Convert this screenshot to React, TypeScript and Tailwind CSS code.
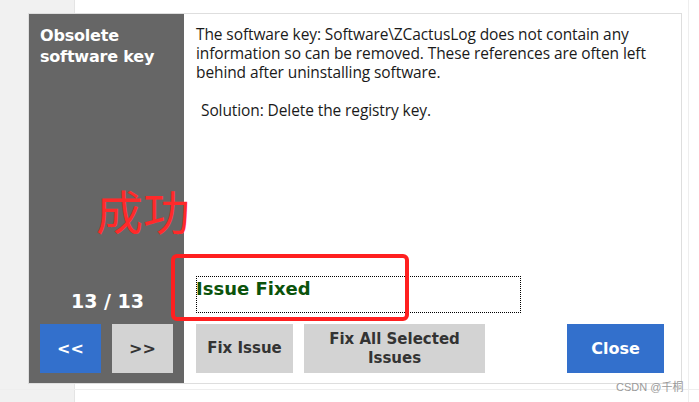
const App = () => {
  return (
    <div className="relative w-[699px] h-[402px] overflow-hidden bg-white flex" style={{ fontFamily: '"DejaVu Sans", sans-serif' }}>
      {/* page behind the dialog */}
      <div className="w-[75px] h-full bg-[#f1f1f1] border-r border-[#e4e4e4]" />
      <div className="flex-1 h-full bg-white border-r border-[#eeeeee] mr-[10px]" />
      <div className="absolute left-0 right-0 top-[389px] h-px bg-[#eeeeee]" />

      {/* dialog */}
      <div className="absolute left-[28px] top-[13px] w-[654px] h-[371px] flex border border-[#dedede] bg-white">
        <div className="w-[155px] h-full bg-[#666666] flex flex-col px-[11px] pt-[11px] pb-[10px]">
          <h2 className="text-white font-bold text-[16px] leading-[21px] tracking-[-0.2px]">Obsolete software key</h2>
          <div className="flex-1" />
          <div className="text-white font-bold text-[19px] text-center mb-[9px] pl-[2px]">13 / 13</div>
          <div className="flex gap-[11px]">
            <button className="w-[61px] h-[49px] bg-[#3370cc] text-white font-bold text-[16px]">&lt;&lt;</button>
            <button className="w-[61px] h-[49px] bg-[#d3d3d3] text-[#333] font-bold text-[16px]">&gt;&gt;</button>
          </div>
        </div>
        <div className="flex-1 h-full flex flex-col pl-[12px] pr-[17px] pt-[11px] pb-[10px]" style={{ fontFamily: '"Open Sans", sans-serif' }}>
          <p className="text-[15.5px] leading-[19px] text-[#1a1a1a] tracking-[-0.1px]">
            The software key: Software\ZCactusLog does not contain any information so can be removed. These references are often left behind after uninstalling software.
          </p>
          <p className="mt-[19px] pl-[5px] text-[15.5px] leading-[19px] text-[#1a1a1a] tracking-[-0.1px]">Solution: Delete the registry key.</p>
          <div className="flex-1" />
          <div className="w-[325px] h-[37px] border border-dotted border-black flex items-center mb-[11px]" style={{ fontFamily: '"DejaVu Sans", sans-serif' }}>
            <span className="text-[#0b530b] font-bold text-[18px] -mt-[12px] -ml-[1px]">Issue Fixed</span>
          </div>
          <div className="flex items-stretch" style={{ fontFamily: '"DejaVu Sans", sans-serif' }}>
            <button className="w-[97px] h-[49px] bg-[#d3d3d3] text-[#333] font-bold text-[15px]">Fix Issue</button>
            <button className="ml-[11px] w-[181px] h-[49px] bg-[#d3d3d3] text-[#333] font-bold text-[15px] leading-[19px]">Fix All Selected<br />Issues</button>
            <div className="flex-1" />
            <button className="w-[97px] h-[49px] bg-[#3370cc] text-white font-bold text-[16px]">Close</button>
          </div>
        </div>
      </div>

      {/* annotations */}
      <div className="absolute left-[96px] top-[186px] text-[#ff2a2a] text-[47px] leading-none" style={{ fontFamily: '"Noto Sans CJK SC", sans-serif' }}>成功</div>
      <div className="absolute left-[171px] top-[254px] w-[238px] h-[67px] border-[4px] border-[#ff2020] rounded-[6px]" />
      <div className="absolute left-[616px] top-[379px] text-[11px] text-[#9a9a9a]" style={{ fontFamily: '"Liberation Sans", "Noto Sans CJK SC", sans-serif' }}>CSDN @千桐</div>
    </div>
  )
}

export default App
